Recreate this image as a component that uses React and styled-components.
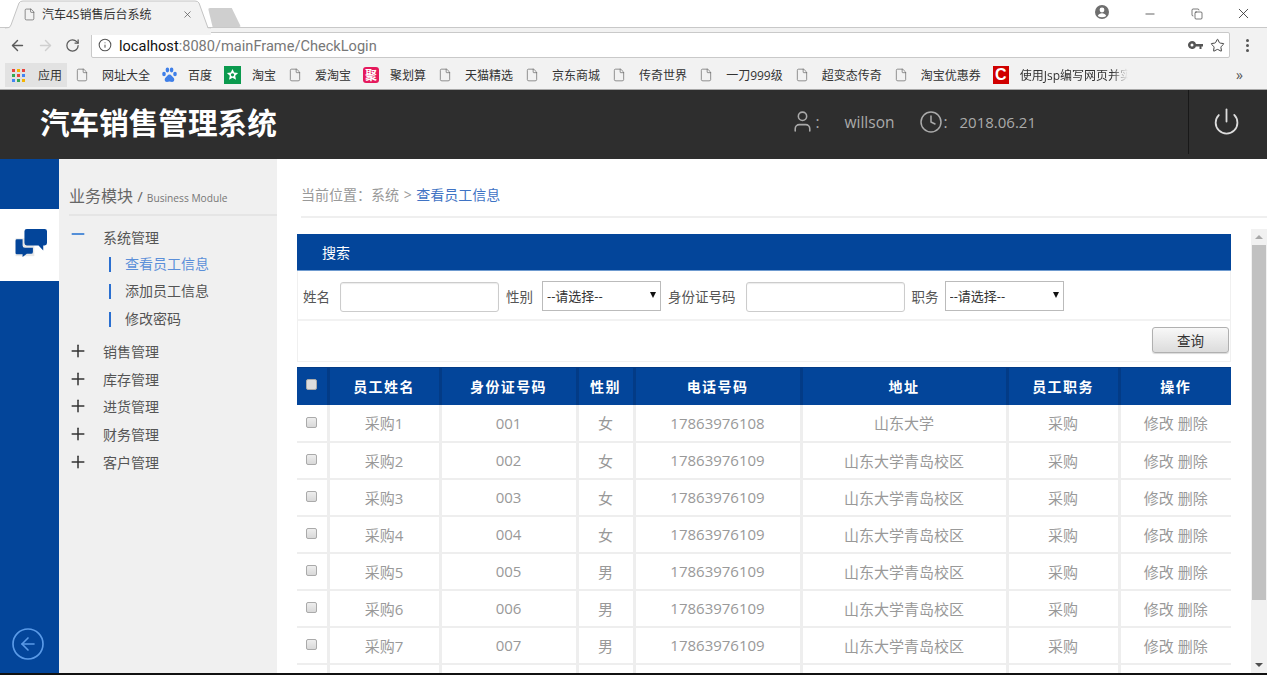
import styled, { createGlobalStyle } from 'styled-components';
import { ArrowLeft, ArrowRight, RotateCw, Info, Star, File, Minus, Copy, X, User, Clock, Power, CircleArrowLeft, Plus } from 'lucide-react';

const bookmarks = [
    { kind: 'doc', text: '网址大全' },
    { kind: 'baidu', text: '百度' },
    { kind: 'taobao', text: '淘宝' },
    { kind: 'doc', text: '爱淘宝' },
    { kind: 'ju', text: '聚划算' },
    { kind: 'doc', text: '天猫精选' },
    { kind: 'doc', text: '京东商城' },
    { kind: 'doc', text: '传奇世界' },
    { kind: 'doc', text: '一刀999级' },
    { kind: 'doc', text: '超变态传奇' },
    { kind: 'doc', text: '淘宝优惠券' },
    { kind: 'c', text: '使用Jsp编写网页并实', fade: true },
];

const subMenu = ['查看员工信息', '添加员工信息', '修改密码'];
const closedMenu = ['销售管理', '库存管理', '进货管理', '财务管理', '客户管理'];
const columns = ['员工姓名', '身份证号码', '性别', '电话号码', '地址', '员工职务', '操作'];
const colWidths = [31, 112, 137, 57, 167, 206, 112, 112];

const staff = [
    ['采购1', '001', '女', '17863976108', '山东大学'],
    ['采购2', '002', '女', '17863976109', '山东大学青岛校区'],
    ['采购3', '003', '女', '17863976109', '山东大学青岛校区'],
    ['采购4', '004', '女', '17863976109', '山东大学青岛校区'],
    ['采购5', '005', '男', '17863976109', '山东大学青岛校区'],
    ['采购6', '006', '男', '17863976109', '山东大学青岛校区'],
    ['采购7', '007', '男', '17863976109', '山东大学青岛校区'],
];

const BookmarkIcon = ({ kind }) => {
    if (kind === 'baidu') {
        return (
            <svg width="15" height="17" viewBox="0 0 15 17" fill="#3f7fe8">
                <ellipse cx="2" cy="7" rx="1.8" ry="2.2" />
                <ellipse cx="5.4" cy="3" rx="1.8" ry="2.4" />
                <ellipse cx="9.6" cy="3" rx="1.8" ry="2.4" />
                <ellipse cx="13" cy="7" rx="1.8" ry="2.2" />
                <path d="M7.5 7.5c-2 0-2.4 2-3.8 3-1.6 1.2-1.2 4.5 1.2 4.5 1 0 1.6-.4 2.6-.4s1.6.4 2.6.4c2.4 0 2.8-3.3 1.2-4.5-1.4-1-1.8-3-3.8-3z" />
            </svg>
        );
    }
    if (kind === 'taobao') {
        return (
            <svg width="17" height="18" viewBox="0 0 17 18">
                <rect width="17" height="18" fill="#0b9a4e" />
                <path d="M8.5 3l1.7 3.6 3.9.5-2.9 2.7.8 3.9-3.5-2-3.5 2 .8-3.9L2.9 7.100l3.900-.5z" fill="#fff" />
                <circle cx="8.5" cy="8.800" r="1.600" fill="#0b9a4e" />
            </svg>
        );
    }
    if (kind === 'ju') return <JuIcon>聚</JuIcon>;
    if (kind === 'c') return <CIcon>C</CIcon>;
    return <DocIcon size={14} strokeWidth={1.2} color="#666" />;
};

const AppsIcon = () => (
    <svg width="13" height="13" viewBox="0 0 13 13">
        {['#e8453c', '#f4b400', '#e8453c', '#34a853', '#e8453c', '#4285f4', '#4285f4', '#34a853', '#f4b400'].map((fill, i) => (
            <rect key={i} x={(i % 3) * 5} y={Math.floor(i / 3) * 5} width="3" height="3" fill={fill} />
        ))}
    </svg>
);

const App = () => {
    return (
        <Page>
            <GlobalStyle />
            <TabStrip>
                <Tab>
                    <TabShape viewBox="0 0 206 35" preserveAspectRatio="none">
                        <path d="M0 28 H2 Q5 28 6 25 L14 3 Q15 1 18 1 H190 Q193 1 194 3 L203 28 H206 V35 H0 Z" fill="#f2f2f2" stroke="#c4c4c4" />
                        <rect x="0" y="28.500" width="206" height="7" fill="#f2f2f2" />
                    </TabShape>
                    <File size={13} strokeWidth={1.2} color="#555" />
                    <TabTitle>汽车4S销售后台系统</TabTitle>
                    <X size={11} strokeWidth={1.6} color="#555" />
                </Tab>
                <NewTab />
                <WindowControls>
                    <AccountIcon viewBox="0 0 14 14" width="14" height="14">
                        <circle cx="7" cy="7" r="7" fill="#6e6e6e" />
                        <circle cx="7" cy="5" r="2.400" fill="#fff" />
                        <path d="M2.800 11c.6-2 2.400-2.800 4.200-2.800s3.600.8 4.200 2.800c-2.400 1.600-6 1.600-8.400 0z" fill="#fff" />
                    </AccountIcon>
                    <WindowButton><Minus size={14} strokeWidth={1.2} color="#222" /></WindowButton>
                    <WindowButton><Copy size={12} strokeWidth={1.2} color="#222" /></WindowButton>
                    <WindowButton><X size={17} strokeWidth={1.1} color="#222" /></WindowButton>
                </WindowControls>
            </TabStrip>
            <Toolbar>
                <NavIcons>
                    <ArrowLeft size={17} strokeWidth={2} color="#5a5a5a" />
                    <ArrowRight size={17} strokeWidth={2} color="#cfcfcf" />
                    <RotateCw size={15} strokeWidth={2} color="#5a5a5a" />
                </NavIcons>
                <AddressBar>
                    <Info size={14} strokeWidth={1.8} color="#555" />
                    <UrlText>localhost<UrlRest>:8080/mainFrame/CheckLogin</UrlRest></UrlText>
                    <svg width="15" height="9" viewBox="0 0 15 9" fill="#555">
                        <path d="M4 0a4 4 0 1 1-3.800 5.200A4 4 0 0 1 4 0zm0 2.500a1.500 1.500 0 1 0 0 3 1.500 1.500 0 0 0 0-3zM7.500 3H15v2.500h-1.500V8h-2V5.500h-4z" />
                    </svg>
                    <Star size={15} strokeWidth={1.6} color="#444" />
                </AddressBar>
                <MenuDots><i /><i /><i /></MenuDots>
            </Toolbar>
            <BookmarksBar>
                <AppsItem><AppsIcon /><span>应用</span></AppsItem>
                {bookmarks.map(b => (
                    <Bookmark key={b.text}>
                        <BookmarkIcon kind={b.kind} />
                        <BookmarkText $fade={b.fade}>{b.text}</BookmarkText>
                    </Bookmark>
                ))}
                <MoreMarks>»</MoreMarks>
            </BookmarksBar>

            <Header>
                <Brand>汽车销售管理系统</Brand>
                <UserInfo>
                    <User size={25} strokeWidth={1.5} color="#aaa" />
                    <Colon>:</Colon>
                    <UserName>willson</UserName>
                    <Clock size={24} strokeWidth={1.5} color="#aaa" />
                    <Colon>:</Colon>
                    <DateText>2018.06.21</DateText>
                </UserInfo>
                <PowerBox><Power size={29} strokeWidth={1.5} color="#ddd" /></PowerBox>
            </Header>

            <Body>
                <Rail>
                    <RailTile>
                        <svg width="33" height="31" viewBox="0 0 34 33">
                            <rect y="11" width="20" height="19" fill="#e8e8e8" />
                            <path d="M12 1h19a2.500 2.500 0 0 1 2.500 2.500V16a2.500 2.500 0 0 1-2.500 2.500h-1.500V24l-5-5.500H12A2.500 2.500 0 0 1 9.500 16V3.500A2.500 2.500 0 0 1 12 1z" fill="#03459a" />
                            <path d="M1.500 12H7.500v6.500a2.500 2.500 0 0 0 2.500 2.500h8.500v4.500a2 2 0 0 1-2 2H12l-4.500 3.500V28H1.500a1.500 1.500 0 0 1-1.500-1.500V13.500A1.500 1.500 0 0 1 1.500 12z" fill="#03459a" />
                        </svg>
                    </RailTile>
                    <BackButton><CircleArrowLeft size={36} strokeWidth={1.1} color="#5b9be8" /></BackButton>
                </Rail>
                <Sidebar>
                    <SideTitle>业务模块 <SideSlash>/</SideSlash> <SideEn>Business Module</SideEn></SideTitle>
                    <OpenRow>
                        <MinusIcon size={20} strokeWidth={1.6} color="#1f6fd0" />
                        <span>系统管理</span>
                    </OpenRow>
                    <SubList>
                        {subMenu.map((item, i) => <SubItem key={item} $active={i === 0}>{item}</SubItem>)}
                    </SubList>
                    <ClosedList>
                        {closedMenu.map(item => (
                            <MenuRow key={item}>
                                <Plus size={20} strokeWidth={1.8} color="#333" />
                                <span>{item}</span>
                            </MenuRow>
                        ))}
                    </ClosedList>
                </Sidebar>
                <Main>
                    <Breadcrumb>
                        当前位置：系统 &gt; <CrumbLink>查看员工信息</CrumbLink>
                    </Breadcrumb>
                    <ScrollRow>
                        <Content>
                            <SearchPanel>
                                <PanelTitle>搜索</PanelTitle>
                                <FilterRow>
                                    <FieldLabel $after={3}>姓名</FieldLabel>
                                    <TextInput />
                                    <FieldLabel $after={2}>性别</FieldLabel>
                                    <SelectWrap><Select><option>--请选择--</option></Select></SelectWrap>
                                    <FieldLabel $after={3}>身份证号码</FieldLabel>
                                    <TextInput />
                                    <FieldLabel $after={-1}>职务</FieldLabel>
                                    <SelectWrap><Select><option>--请选择--</option></Select></SelectWrap>
                                </FilterRow>
                                <ButtonRow>
                                    <QueryBtn>查询</QueryBtn>
                                </ButtonRow>
                            </SearchPanel>
                            <StaffTable>
                                <colgroup>
                                    {colWidths.map((w, i) => <col key={i} width={w} />)}
                                </colgroup>
                                <thead>
                                    <tr>
                                        <HeadCell><CheckBox type="checkbox" $head /></HeadCell>
                                        {columns.map(c => <HeadCell key={c}>{c}</HeadCell>)}
                                    </tr>
                                </thead>
                                <tbody>
                                    {staff.map(row => (
                                        <tr key={row[1]}>
                                            <Cell><CheckBox type="checkbox" /></Cell>
                                            {row.map((v, i) => <Cell key={i}>{v}</Cell>)}
                                            <Cell>采购</Cell>
                                            <Cell>修改 删除</Cell>
                                        </tr>
                                    ))}
                                    <tr>
                                        {colWidths.map((w, i) => <Cell key={i} />)}
                                    </tr>
                                </tbody>
                            </StaffTable>
                        </Content>
                        <Scrollbar>
                            <ScrollArrow $up />
                            <ScrollThumb />
                            <ScrollArrow />
                        </Scrollbar>
                    </ScrollRow>
                </Main>
            </Body>
        </Page>
    );
};

export default App;

const GlobalStyle = createGlobalStyle`
    html, body {
        margin: 0;
        padding: 0;
        height: 100%;
        overflow: hidden;
        background: #fff;
    }
    body {
        font-family: "Open Sans", "Noto Sans CJK SC", sans-serif;
    }
    * {
        box-sizing: border-box;
    }
`;

const Page = styled.div`
    width: 1267px;
    height: 675px;
    display: flex;
    flex-direction: column;
    overflow: hidden;
    border-bottom: 2px solid #111;
`;

const TabStrip = styled.div`
    flex: 0 0 28px;
    display: flex;
    align-items: flex-start;
    background: #fff;
    border-bottom: 1px solid #c8c8c8;
    padding-left: 5px;
`;

const Tab = styled.div`
    position: relative;
    width: 206px;
    height: 27px;
    display: flex;
    align-items: center;
    padding: 1px 18px 0 18px;
    color: #333;
`;

const TabShape = styled.svg`
    position: absolute;
    left: 0;
    top: 0;
    width: 206px;
    height: 35px;
    z-index: 0;

    & ~ * {
        position: relative;
        z-index: 1;
    }
`;

const TabTitle = styled.span`
    flex: 1;
    margin-left: 6px;
    font-size: 12px;
    white-space: nowrap;
`;

const NewTab = styled.div`
    width: 33px;
    height: 19px;
    margin: 8px 0 0 -3px;
    background: #cfcfcf;
    border-radius: 2px;
    clip-path: polygon(0 0, 72% 0, 100% 100%, 14% 100%);
`;

const WindowControls = styled.div`
    margin-left: auto;
    height: 27px;
    display: flex;
    align-items: center;
`;

const AccountIcon = styled.svg`
    margin-right: 17px;
    margin-top: -3px;
`;

const WindowButton = styled.div`
    width: 47px;
    display: flex;
    justify-content: center;
`;

const Toolbar = styled.div`
    flex: 0 0 34px;
    display: flex;
    align-items: center;
    background: #f2f2f2;
    padding: 0 0 0 9px;
`;

const NavIcons = styled.div`
    display: flex;
    align-items: center;
    gap: 11px;
    width: 82px;
`;

const AddressBar = styled.div`
    width: 1139px;
    height: 26px;
    display: flex;
    align-items: center;
    gap: 7px;
    padding: 0 4px 0 6px;
    background: #fff;
    border: 1px solid #c9c9c9;
    border-radius: 2px;
`;

const UrlText = styled.div`
    flex: 1;
    padding-top: 1px;
    font-family: "Roboto", sans-serif;
    font-size: 14.600px;
    color: #111;
`;

const UrlRest = styled.span`
    color: #777;
`;

const MenuDots = styled.div`
    margin-left: 16px;
    display: flex;
    flex-direction: column;
    gap: 2px;

    i {
        width: 3px;
        height: 3px;
        border-radius: 50%;
        background: #555;
    }
`;

const BookmarksBar = styled.div`
    flex: 0 0 28px;
    display: flex;
    align-items: center;
    gap: 12px;
    background: #f2f2f2;
    border-bottom: 1px solid #a8a8a8;
    padding: 0 0 1px 5px;
    position: relative;
`;

const AppsItem = styled.div`
    width: 62px;
    height: 24px;
    display: flex;
    align-items: center;
    gap: 13px;
    padding-left: 7px;
    margin-right: -4px;
    background: #e2e2e2;
    font-size: 12px;
    color: #333;
`;

const Bookmark = styled.div`
    display: flex;
    align-items: center;
    gap: 11px;
    font-size: 12px;
    color: #333;
    white-space: nowrap;
`;

const DocIcon = styled(File)`
    margin-right: 2px;
`;

const BookmarkText = styled.span`
    ${props => props.$fade && `
        width: 108px;
        overflow: hidden;
        -webkit-mask-image: linear-gradient(to right, #000 85%, transparent);
        mask-image: linear-gradient(to right, #000 85%, transparent);
    `}
`;

const JuIcon = styled.span`
    width: 16px;
    height: 16px;
    display: flex;
    align-items: center;
    justify-content: center;
    border-radius: 3px;
    background: #e5195c;
    color: #fff;
    font-size: 12px;
    font-weight: 700;
`;

const CIcon = styled.span`
    width: 16px;
    height: 18px;
    display: flex;
    align-items: center;
    justify-content: center;
    background: #d00000;
    color: #fff;
    font-family: "Liberation Sans", sans-serif;
    font-size: 16px;
    font-weight: 700;
`;

const MoreMarks = styled.span`
    position: absolute;
    left: 1236px;
    top: 3px;
    font-size: 14px;
    color: #555;
`;

const Header = styled.div`
    flex: 0 0 69px;
    display: flex;
    align-items: center;
    background: #2e2e2e;
`;

const Brand = styled.div`
    margin: 0 0 6px 40px;
    font-size: 29.600px;
    font-weight: 700;
    color: #fff;
    white-space: nowrap;
`;

const UserInfo = styled.div`
    margin: 0 0 6px auto;
    display: flex;
    align-items: center;
    color: #aaa;
    font-size: 15.500px;
`;

const Colon = styled.span`
    margin: 0 0 0 1px;
    width: 8px;
`;

const UserName = styled.span`
    margin: 0 24px 0 21px;
`;

const DateText = styled.span`
    margin: 0 152px 0 8px;
    font-size: 15px;
`;

const PowerBox = styled.div`
    width: 79px;
    height: 64px;
    align-self: flex-start;
    display: flex;
    align-items: center;
    justify-content: center;
    padding: 0 4px 2px 0;
    border-left: 1px solid #181818;
`;

const Body = styled.div`
    flex: 1;
    min-height: 0;
    display: flex;
`;

const Rail = styled.div`
    flex: 0 0 59px;
    display: flex;
    flex-direction: column;
    background: #03459a;
    padding-top: 50px;
`;

const RailTile = styled.div`
    height: 72px;
    display: flex;
    align-items: center;
    justify-content: center;
    padding: 0 0 4px 3px;
    background: #fff;
`;

const BackButton = styled.div`
    margin-top: auto;
    padding: 0 0 11px 10px;
    display: flex;
`;

const Sidebar = styled.div`
    flex: 0 0 218px;
    background: #f0f0f0;
    padding: 26px 0 0 10px;
`;

const SideTitle = styled.div`
    height: 31px;
    line-height: 22px;
    border-bottom: 2px solid #e5e5e5;
    font-size: 16px;
    color: #666;
    white-space: nowrap;
`;

const SideSlash = styled.span`
    font-size: 15px;
`;

const SideEn = styled.span`
    font-size: 10.200px;
    color: #777;
`;

const MenuRow = styled.div`
    height: 27.800px;
    display: flex;
    align-items: center;
    gap: 15px;
    font-size: 14px;
    color: #555;
    margin-left: -1px;
`;

const OpenRow = styled(MenuRow)`
    margin-top: 7px;
`;

const MinusIcon = styled(Minus)`
    margin-bottom: 5px;
`;

const SubList = styled.div`
    margin-top: 1px;
`;

const SubItem = styled.div`
    position: relative;
    height: 27.400px;
    line-height: 24px;
    padding-left: 56px;
    font-size: 14px;
    color: ${props => props.$active ? '#5b8fd9' : '#555'};

    &::before {
        content: '';
        position: absolute;
        left: 40px;
        top: 5px;
        width: 2px;
        height: 15px;
        background: #2a6fd0;
    }
`;

const ClosedList = styled.div`
    margin-top: 3px;
`;

const Main = styled.div`
    flex: 1;
    min-width: 0;
    display: flex;
    flex-direction: column;
`;

const Breadcrumb = styled.div`
    flex: 0 0 59px;
    margin-left: 24px;
    padding-top: 25px;
    border-bottom: 2px solid #efefef;
    font-size: 14px;
    word-spacing: 1px;
    color: #999;
`;

const CrumbLink = styled.span`
    color: #3f73c4;
`;

const ScrollRow = styled.div`
    flex: 1;
    min-height: 0;
    margin-top: 11px;
    display: flex;
`;

const Content = styled.div`
    width: 974px;
    padding: 5px 20px 0 20px;
    overflow: hidden;
`;

const SearchPanel = styled.div`
    border: 1px solid #f0f0f0;
    border-top: 0;
`;

const PanelTitle = styled.div`
    height: 37px;
    line-height: 37px;
    margin: 0 -1px;
    padding-left: 25px;
    border-bottom: 1px solid #6f9bd0;
    background: #03459a;
    color: #fff;
    font-size: 14px;
`;

const FilterRow = styled.div`
    height: 50px;
    display: flex;
    align-items: center;
    gap: 7px;
    padding: 2px 0 0 5px;
    border-bottom: 2px solid #f2f2f2;
`;

const FieldLabel = styled.span`
    margin-right: ${props => props.$after}px;
    font-size: 13.500px;
    color: #555;
    white-space: nowrap;
`;

const TextInput = styled.input.attrs({ type: 'text' })`
    width: 159px;
    height: 30px;
    margin-top: 2px;
    border: 1px solid #ccc;
    border-radius: 3px;
    box-shadow: inset 0 1px 1px rgba(0, 0, 0, 0.08);
    outline: none;
`;

const SelectWrap = styled.div`
    position: relative;
    width: 119px;
    height: 30px;

    &::after {
        content: '';
        position: absolute;
        right: 5px;
        top: 11px;
        border-left: 3.500px solid transparent;
        border-right: 3.500px solid transparent;
        border-top: 6px solid #111;
    }
`;

const Select = styled.select`
    appearance: none;
    width: 100%;
    height: 100%;
    padding-left: 4px;
    border: 1px solid #bbb;
    border-radius: 0;
    background: #fff;
    color: #333;
    font-family: inherit;
    font-size: 13px;
`;

const ButtonRow = styled.div`
    height: 40px;
    display: flex;
    justify-content: flex-end;
    align-items: center;
    padding: 0 1px 2px 0;
`;

const QueryBtn = styled.button`
    width: 77px;
    height: 26px;
    padding: 0;
    border: 1px solid #b0b0b0;
    border-radius: 3px;
    background: linear-gradient(#f8f8f8, #dcdcdc);
    box-shadow: 0 1px 1px rgba(0, 0, 0, 0.15);
    color: #333;
    font-family: inherit;
    font-size: 13.500px;
`;

const StaffTable = styled.table`
    width: 934px;
    margin-top: 5px;
    table-layout: fixed;
    border-collapse: collapse;
`;

const HeadCell = styled.th`
    height: 37px;
    padding: 0;
    border-right: 3px solid #033b86;
    border-top: 1px solid #033b86;
    background: #03459a;
    color: #fff;
    font-size: 14px;
    font-weight: 700;
    letter-spacing: 1.400px;

    &:last-child {
        border-right: 0;
    }
`;

const Cell = styled.td`
    height: 37px;
    padding: 0;
    border-right: 3px solid #eee;
    border-bottom: 2px solid #eee;
    text-align: center;
    color: #999;
    font-size: 15px;

    &:last-child {
        border-right: 0;
    }
`;

const CheckBox = styled.input`
    appearance: none;
    display: block;
    width: 11px;
    height: 11px;
    margin: ${props => props.$head ? '-3px' : '-1px'} 0 0 9px;
    border: 1px solid #aaa;
    border-radius: 2px;
    background: ${props => props.$head ? '#ddd' : 'linear-gradient(#eee, #d8d8d8)'};
`;

const Scrollbar = styled.div`
    width: 16px;
    display: flex;
    flex-direction: column;
    background: #f1f1f1;
`;

const ScrollArrow = styled.div`
    position: relative;
    flex: 0 0 16px;
    margin-top: ${props => props.$up ? '0' : 'auto'};

    &::after {
        content: '';
        position: absolute;
        left: 4px;
        top: 6px;
        border-left: 4px solid transparent;
        border-right: 4px solid transparent;
        ${props => props.$up ? 'border-bottom: 4px solid #a8a8a8;' : 'border-top: 4px solid #505050;'}
    }
`;

const ScrollThumb = styled.div`
    height: 355px;
    margin: 0 1px;
    background: #c1c1c1;
`;
